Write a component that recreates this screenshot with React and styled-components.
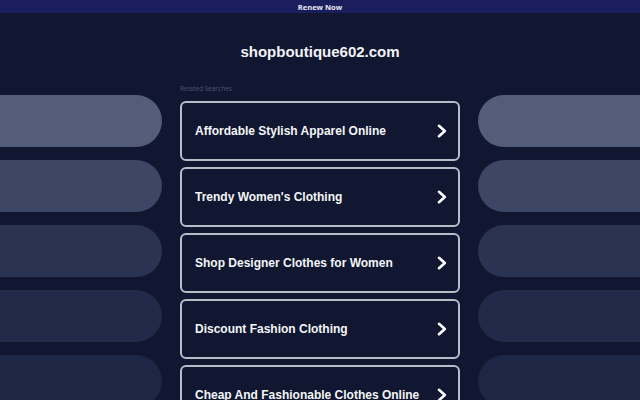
import React from "react";
import styled, { createGlobalStyle } from "styled-components";

const Global = createGlobalStyle`
  html, body { margin: 0; padding: 0; background: #111730; }
  body { width: 640px; height: 400px; overflow: hidden; font-family: "Liberation Sans", Arial, sans-serif; }
`;

const Page = styled.div`
  width: 640px;
  height: 400px;
  overflow: hidden;
  background: #111730;
  display: flex;
  flex-direction: column;
  & > * { flex-shrink: 0; }
`;

const TopBar = styled.div`
  height: 13px;
  background: #1b1e5d;
  display: flex;
  align-items: center;
  justify-content: center;
  font-family: "Open Sans", sans-serif;
  font-weight: 700;
  font-size: 7.5px;
  color: #e8e9f2;
`;

const Title = styled.h1`
  margin: 0;
  padding: 29px 0 21px;
  text-align: center;
  font-family: "Liberation Sans", Arial, sans-serif;
  font-weight: 700;
  font-size: 15px;
  line-height: 20px;
  color: #f2f3f7;
`;

const Main = styled.div`
  display: grid;
  grid-template-columns: 162px 1fr 162px;
`;

const Side = styled.div`
  display: flex;
  flex-direction: column;
  gap: 13px;
  padding-top: 12px;
`;

const Pill = styled.div`
  height: 52px;
  flex-shrink: 0;
  background: ${(p) => p.$color};
  border-radius: ${(p) => (p.$side === "left" ? "0 26px 26px 0" : "26px 0 0 26px")};
`;

const Center = styled.div`
  padding: 0 18px;
  display: flex;
  flex-direction: column;
`;

const Label = styled.div`
  font-family: "Open Sans", sans-serif;
  font-size: 6.5px;
  line-height: 12px;
  color: #4e5572;
  margin-bottom: 6px;
`;

const List = styled.div`
  display: flex;
  flex-direction: column;
  gap: 6px;
`;

const Button = styled.div`
  box-sizing: border-box;
  height: 60px;
  flex-shrink: 0;
  border: 2px solid #b9bdc8;
  border-radius: 6px;
  background: #111730;
  display: flex;
  align-items: center;
  justify-content: space-between;
  padding: 0 10px 0 13px;
  color: #f4f5f8;
  font-family: "Liberation Sans", Arial, sans-serif;
  font-weight: 700;
  font-size: 12px;
  white-space: nowrap;
`;

const Chevron = () => (
  <svg width="12" height="14" viewBox="0 0 12 14" fill="none">
    <path d="M3 1.8 L8.8 7 L3 12.2" stroke="#ffffff" strokeWidth="2.6" strokeLinecap="round" strokeLinejoin="round" />
  </svg>
);

const colors = ["#535c79", "#3e4666", "#2b3352", "#222a4a", "#1e2646"];
const items = [
  "Affordable Stylish Apparel Online",
  "Trendy Women's Clothing",
  "Shop Designer Clothes for Women",
  "Discount Fashion Clothing",
  "Cheap And Fashionable Clothes Online",
];

export default function App() {
  return (
    <Page>
      <Global />
      <TopBar>Renew Now</TopBar>
      <Title>shopboutique602.com</Title>
      <Main>
        <Side>
          {colors.map((c) => (
            <Pill key={c} $color={c} $side="left" />
          ))}
        </Side>
        <Center>
          <Label>Related Searches</Label>
          <List>
            {items.map((t) => (
              <Button key={t}>
                <span>{t}</span>
                <Chevron />
              </Button>
            ))}
          </List>
        </Center>
        <Side>
          {colors.map((c) => (
            <Pill key={c} $color={c} $side="right" />
          ))}
        </Side>
      </Main>
    </Page>
  );
}
